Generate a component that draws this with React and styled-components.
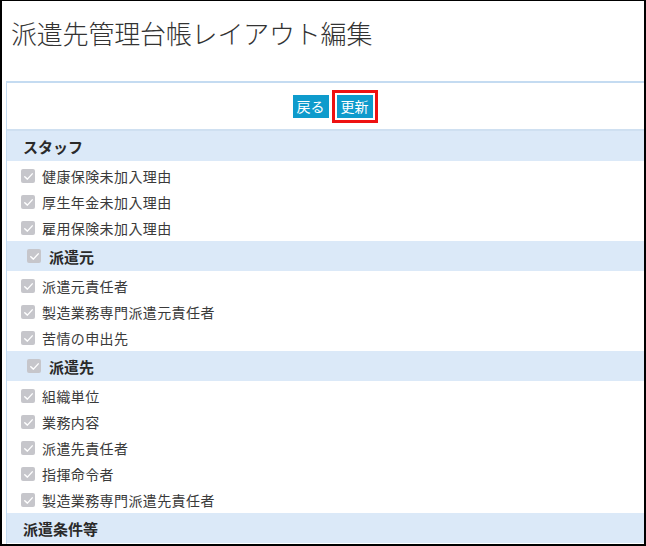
import React from "react";
import styled, { createGlobalStyle } from "styled-components";

const GlobalStyle = createGlobalStyle`
  html, body {
    margin: 0;
    padding: 0;
    background: #ffffff;
  }
  body {
    font-family: "Noto Sans CJK JP", "Noto Sans", sans-serif;
  }
`;

const sections = [
  {
    title: "スタッフ",
    checkable: false,
    items: ["健康保険未加入理由", "厚生年金未加入理由", "雇用保険未加入理由"],
  },
  {
    title: "派遣元",
    checkable: true,
    items: ["派遣元責任者", "製造業務専門派遣元責任者", "苦情の申出先"],
  },
  {
    title: "派遣先",
    checkable: true,
    items: [
      "組織単位",
      "業務内容",
      "派遣先責任者",
      "指揮命令者",
      "製造業務専門派遣先責任者",
    ],
  },
  {
    title: "派遣条件等",
    checkable: false,
    items: [],
  },
];

const Check = () => (
  <CheckBox>
    <svg width="11" height="11" viewBox="0 0 10 10">
      <path
        d="M1.6 5.2 L4 7.4 L8.4 2.6"
        fill="none"
        stroke="#ffffff"
        strokeWidth="1.3"
        strokeLinecap="round"
        strokeLinejoin="round"
      />
    </svg>
  </CheckBox>
);

const App = () => {
  return (
    <Frame>
      <GlobalStyle />
      <Title>派遣先管理台帳レイアウト編集</Title>
      <Panel>
        <Toolbar>
          <Button>戻る</Button>
          <Button $highlight>更新</Button>
        </Toolbar>
        {sections.map((section) => (
          <Section key={section.title}>
            <SectionHeader $checkable={section.checkable}>
              {section.checkable && <Check />}
              {section.title}
            </SectionHeader>
            {section.items.length > 0 && (
              <ItemList>
                {section.items.map((item) => (
                  <Item key={item}>
                    <Check />
                    {item}
                  </Item>
                ))}
              </ItemList>
            )}
          </Section>
        ))}
      </Panel>
    </Frame>
  );
};

export default App;

const Frame = styled.div`
  box-sizing: border-box;
  width: 646px;
  height: 546px;
  border: 2px solid #000000;
  border-top-width: 1px;
  overflow: hidden;
  display: flex;
  flex-direction: column;
`;

const Title = styled.h1`
  margin: 0;
  padding: 12px 0 0 9px;
  height: 80px;
  flex-shrink: 0;
  box-sizing: border-box;
  font-size: 26px;
  line-height: 40px;
  font-weight: 300;
  color: #333333;
  letter-spacing: -0.2px;
`;

const Panel = styled.div`
  margin-left: 4px;
  flex: 1;
  border-top: 2px solid #c4dbf1;
  border-left: 1px solid #c4dbf1;
  display: flex;
  flex-direction: column;
`;

const Toolbar = styled.div`
  height: 46px;
  flex-shrink: 0;
  display: flex;
  align-items: center;
  justify-content: center;
  gap: 8px;
  padding-left: 14px;
  border-bottom: 2px solid #cfe0f1;
`;

const Button = styled.button`
  font-family: inherit;
  height: 23px;
  padding: 0 4px;
  border: none;
  border-radius: 0;
  background: #0e9bcc;
  color: #ffffff;
  font-size: 14px;
  line-height: 23px;
  outline: ${(props) => (props.$highlight ? "3px solid #ee1111" : "none")};
  outline-offset: 2px;
`;

const Section = styled.div`
  display: flex;
  flex-direction: column;
  flex-shrink: 0;
`;

const SectionHeader = styled.div`
  height: 30px;
  flex-shrink: 0;
  display: flex;
  align-items: center;
  gap: 8px;
  padding-left: ${(props) => (props.$checkable ? "20px" : "16px")};
  background: #dbe9f8;
  font-size: 15px;
  font-weight: 700;
  color: #2a2a2a;
`;

const ItemList = styled.div`
  padding-top: 2px;
  display: flex;
  flex-direction: column;
`;

const Item = styled.div`
  height: 26px;
  display: flex;
  align-items: center;
  gap: 7px;
  padding-left: 14px;
  font-size: 14px;
  letter-spacing: 0.4px;
  color: #3a3a3a;
`;

const CheckBox = styled.span`
  width: 14px;
  height: 14px;
  flex-shrink: 0;
  border-radius: 2px;
  background: #c6c6cb;
  display: inline-flex;
  align-items: center;
  justify-content: center;
`;
